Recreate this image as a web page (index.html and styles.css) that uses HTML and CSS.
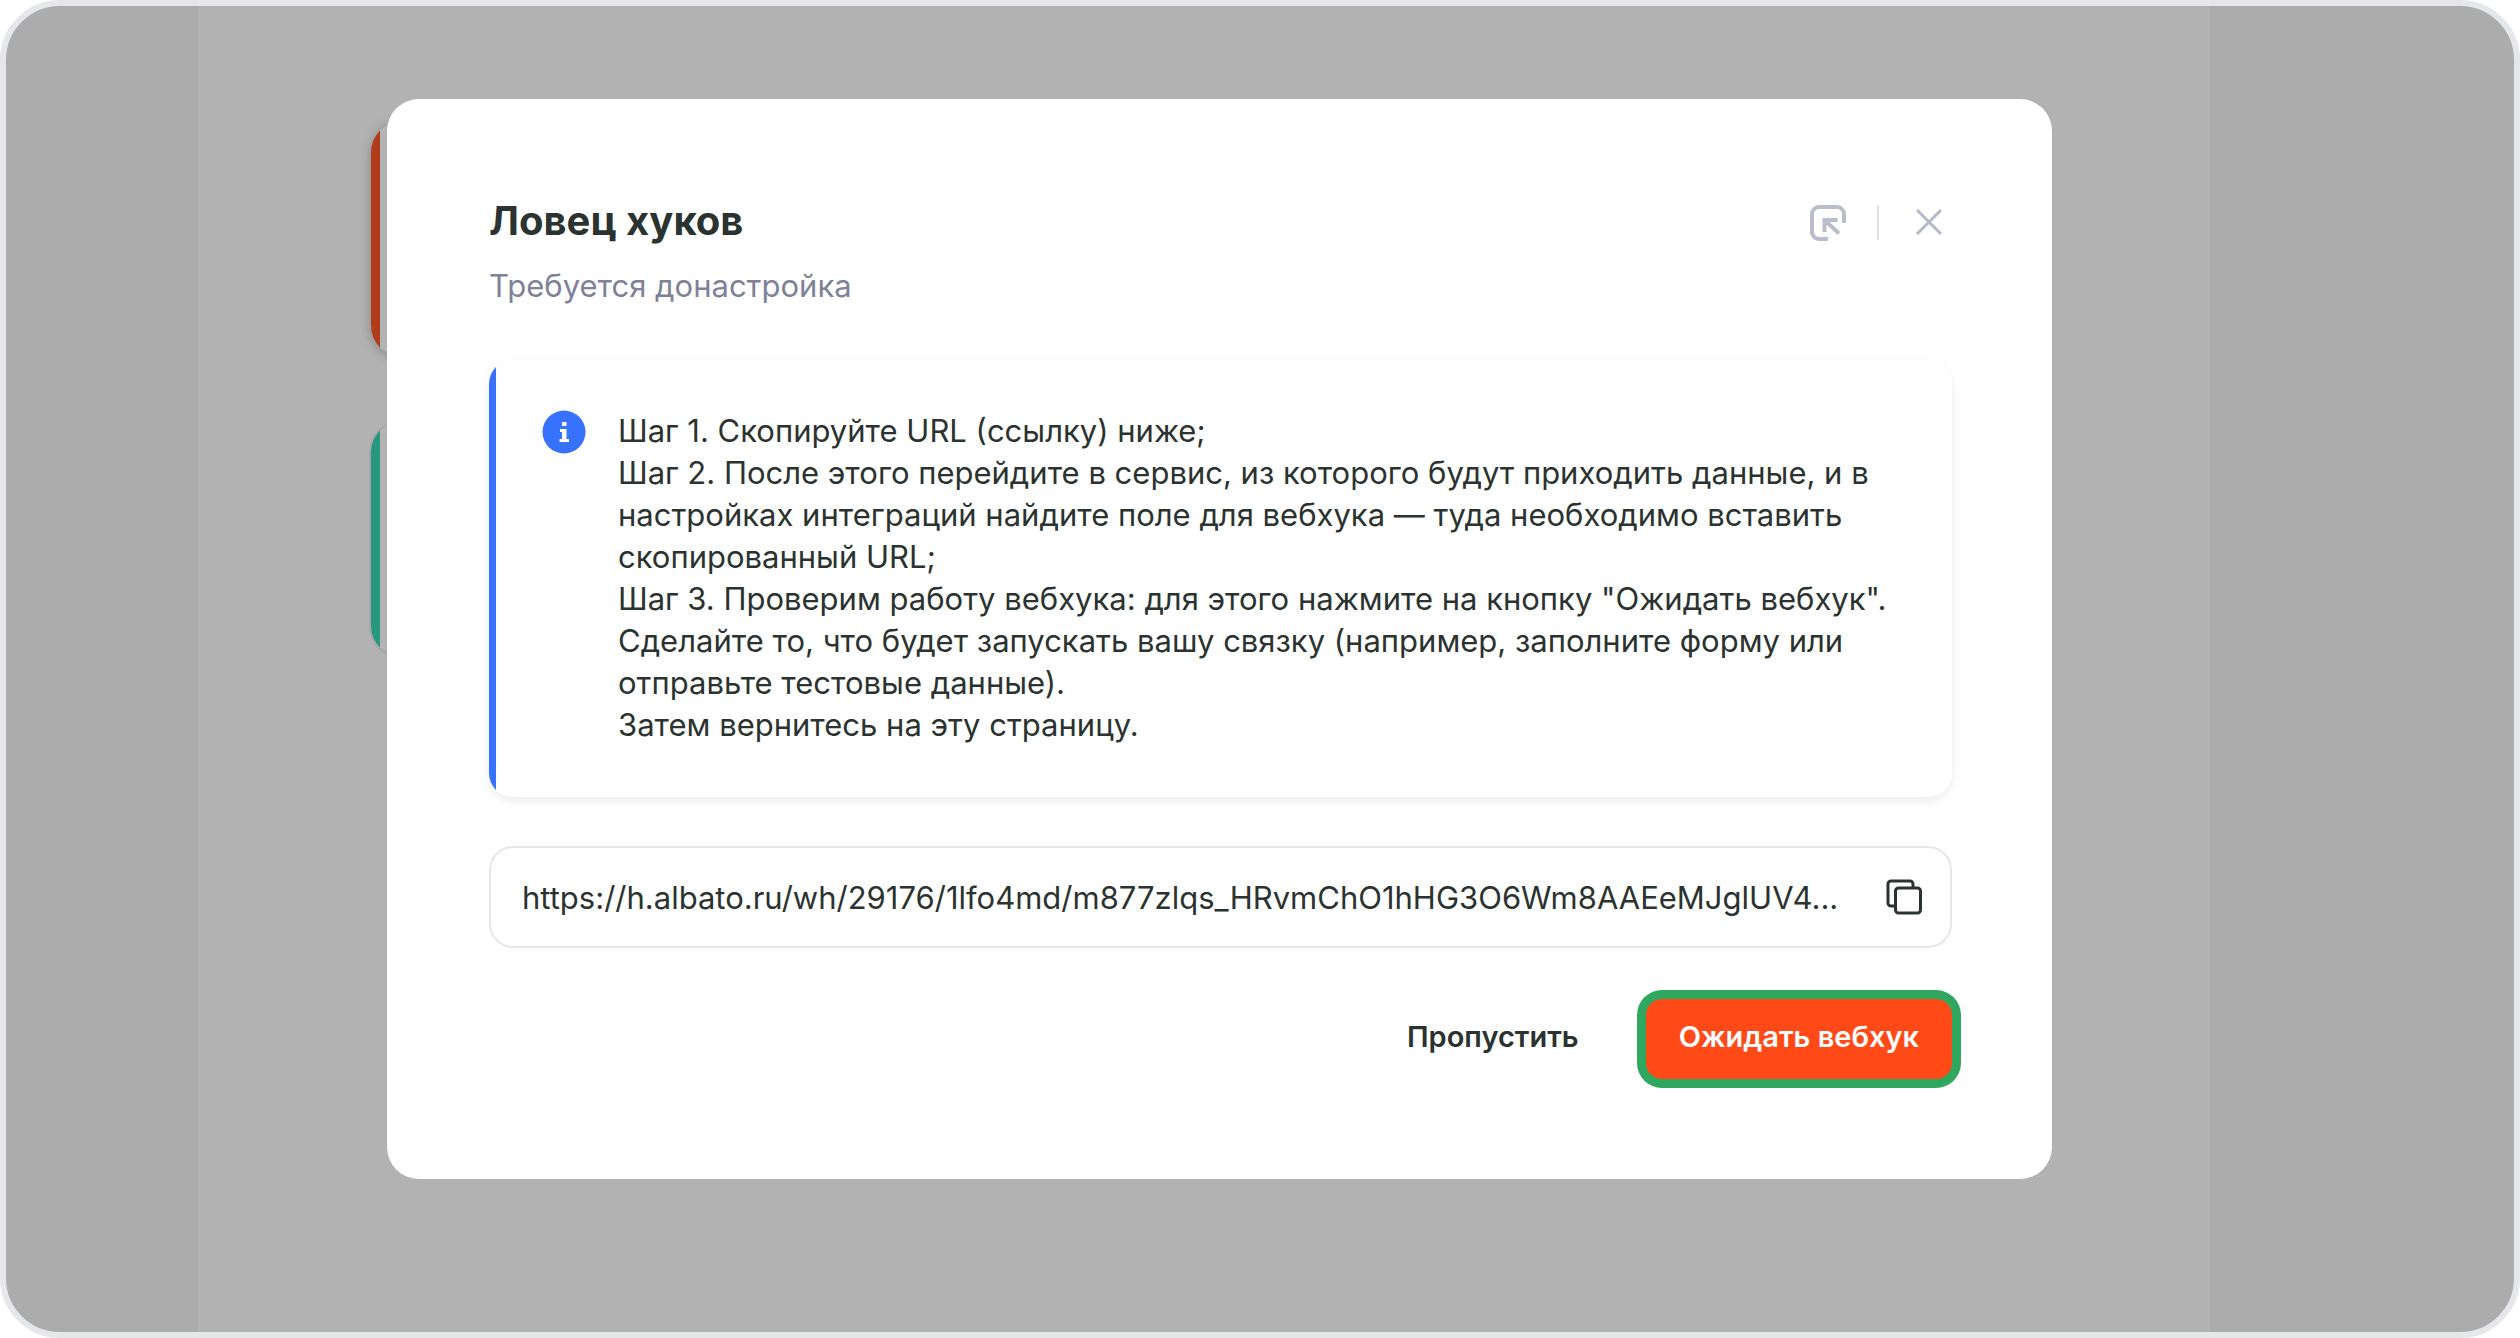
FILE: index.html
```html
<!DOCTYPE html>
<html lang="ru">
<head>
  <meta charset="UTF-8">
  <meta name="viewport" content="width=device-width, initial-scale=1.0">
  <title>Ловец хуков</title>
  <link rel="stylesheet" href="styles.css">
</head>
<body>
  <div class="frame">
    <!-- Page behind the overlay -->
    <main class="canvas">
      <div class="step step-red"></div>
      <div class="step step-green"></div>
    </main>

    <div class="overlay">
      <section class="modal" role="dialog" aria-labelledby="modalTitle">
        <header class="modal-header">
          <div class="modal-heading">
            <h1 class="modal-title" id="modalTitle">Ловец хуков</h1>
            <p class="modal-subtitle">Требуется донастройка</p>
          </div>
          <div class="modal-tools">
            <button type="button" class="icon-btn" aria-label="Свернуть">
              <svg width="38" height="38" viewBox="0 0 38 38" fill="none" stroke="#b9bdcc" stroke-width="4">
                <path d="M19 36H10a7 7 0 0 1-7-7V11a7 7 0 0 1 7-7h18a7 7 0 0 1 7 7v9"/>
                <path d="M15.500 29V17h13M16 17.500l14 13"/>
              </svg>
            </button>
            <span class="divider"></span>
            <button type="button" class="icon-btn" aria-label="Закрыть">
              <svg width="28" height="28" viewBox="0 0 28 28" fill="none" stroke="#b4b8c8" stroke-width="3">
                <path d="M2 2l24 24M26 2L2 26"/>
              </svg>
            </button>
          </div>
        </header>

        <div class="info">
          <svg class="info-icon" width="44" height="44" viewBox="0 0 44 44">
            <circle cx="22" cy="22" r="21.500" fill="#3772ff"/>
            <path d="M20 12h4.500v4H20zM18 19h6.500v10H27v3H17.500v-3h2.500v-7H18z" fill="#fff"/>
          </svg>
          <p class="info-text">
            Шаг 1. Скопируйте URL (ссылку) ниже;<br>
            Шаг 2. После этого перейдите в сервис, из которого будут приходить данные, и в настройках интеграций найдите поле для вебхука — туда необходимо вставить скопированный URL;<br>
            Шаг 3. Проверим работу вебхука: для этого нажмите на кнопку "Ожидать вебхук". Сделайте то, что будет запускать вашу связку (например, заполните форму или отправьте тестовые данные).<br>
            Затем вернитесь на эту страницу.
          </p>
        </div>

        <div class="url-field">
          <input type="text" class="url-input" aria-label="URL вебхука" value="https://h.albato.ru/wh/29176/1lfo4md/m877zlqs_HRvmChO1hHG3O6Wm8AAEeMJglUV4..." readonly>
          <button type="button" class="icon-btn" aria-label="Скопировать">
            <svg width="38" height="38" viewBox="0 0 38 38" fill="none" stroke="#2b3330" stroke-width="3">
              <path d="M9 28H6a3 3 0 0 1-3-3V6a3 3 0 0 1 3-3h19a3 3 0 0 1 3 3v3"/>
              <rect x="10.500" y="10" width="25" height="25" rx="3"/>
            </svg>
          </button>
        </div>

        <div class="modal-actions">
          <button type="button" class="btn">Пропустить</button>
          <button type="button" class="btn btn-primary">Ожидать вебхук</button>
        </div>
      </section>
    </div>
  </div>
</body>
</html>
```

FILE: styles.css
```css
* {
  box-sizing: border-box;
}

body {
  margin: 0;
  background-color: #fff;
  color: #2b3330;
  font-family: Inter, "Liberation Sans", sans-serif;
}

.frame {
  position: relative;
  display: flex;
  min-height: 100vh;
  padding: 0 304px 0 192px;
  border: 6px solid #e5e7eb;
  border-radius: 60px;
  background-color: #acacac;
  overflow: hidden;
}

/* Page behind the overlay */
.canvas {
  flex: 1;
  display: flex;
  flex-direction: column;
  gap: 66px;
  padding: 116px 173px;
  background-color: #b2b2b2;
}

.step {
  height: 234px;
  border-radius: 30px;
  background: linear-gradient(to right, #b13c1c 9px, #b3b3b3 9px);
  box-shadow: 0 2px 12px rgba(0, 0, 0, 0.25);
}

.step-green {
  background: linear-gradient(to right, #27977f 9px, #b3b3b3 9px);
  box-shadow: 0 0 0 2px #a5a5a5;
}

/* Modal */
.overlay {
  position: absolute;
  inset: 0;
  padding: 93px 462px 93px 381px;
}

.modal {
  padding: 98px 100px 100px 102px;
  border-radius: 32px;
  background-color: #fff;
}

.modal-header {
  display: flex;
  justify-content: space-between;
  align-items: flex-start;
  margin-bottom: 53px;
}

.modal-title {
  margin: 0 0 20px;
  font-size: 40px;
  line-height: 48px;
  font-weight: 700;
}

.modal-subtitle {
  margin: 0;
  color: #7e8299;
  font-size: 31px;
  line-height: 42px;
}

.modal-tools {
  display: flex;
  align-items: center;
  gap: 30px;
  height: 50px;
  padding-right: 9px;
}

.divider {
  width: 2px;
  height: 35px;
  margin-right: 6px;
  background-color: #dfe1e8;
}

.icon-btn {
  display: flex;
  padding: 0;
  border: none;
  background: none;
  cursor: pointer;
}

/* Instructions */
.info {
  display: flex;
  gap: 32px;
  padding: 50px 60px 51px 53px;
  border-radius: 24px;
  background: linear-gradient(to right, #3772ff 7px, #fff 7px);
  box-shadow: 0 4px 10px rgba(0, 0, 0, 0.08);
}

.info-icon {
  flex-shrink: 0;
}

.info-text {
  margin: 0;
  font-size: 31px;
  line-height: 42px;
}

/* Webhook URL */
.url-field {
  display: flex;
  align-items: center;
  gap: 24px;
  height: 102px;
  margin-top: 49px;
  padding: 0 27px 0 31px;
  border: 2px solid #e5e7eb;
  border-radius: 24px;
}

.url-input {
  flex: 1;
  min-width: 0;
  padding: 0;
  border: none;
  outline: none;
  background: none;
  color: inherit;
  font-family: inherit;
  font-size: 31px;
  text-overflow: ellipsis;
}

/* Buttons */
.modal-actions {
  display: flex;
  justify-content: flex-end;
  gap: 34px;
  margin-top: 51px;
}

.btn {
  height: 80px;
  padding: 0 33px 6px;
  border: none;
  border-radius: 16px;
  background: none;
  color: inherit;
  font-family: inherit;
  font-size: 29px;
  font-weight: 600;
  cursor: pointer;
}

.btn-primary {
  background-color: #ff4a17;
  box-shadow: 0 0 0 9px #2fa75f;
  color: #fff;
}
```
